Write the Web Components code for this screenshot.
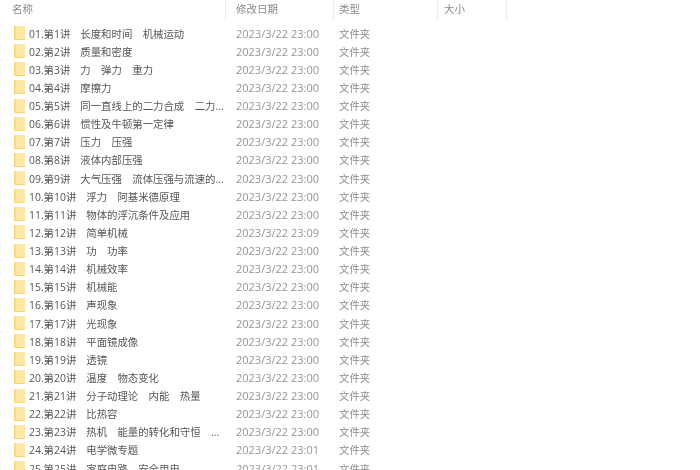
<!DOCTYPE html>
<html lang="zh">
<head>
<meta charset="utf-8">
<title>文件夹</title>
<style>
html,body{margin:0;height:470px;overflow:hidden;background:#fff;}
</style>
</head>
<body>
<file-list></file-list>
<script>
const filas = [
	["01.第1讲","长度和时间　机械运动","23:00"],
	["02.第2讲","质量和密度","23:00"],
	["03.第3讲","力　弹力　重力","23:00"],
	["04.第4讲","摩擦力","23:00"],
	["05.第5讲","同一直线上的二力合成　二力...","23:00"],
	["06.第6讲","惯性及牛顿第一定律","23:00"],
	["07.第7讲","压力　压强","23:00"],
	["08.第8讲","液体内部压强","23:00"],
	["09.第9讲","大气压强　流体压强与流速的...","23:00"],
	["10.第10讲","浮力　阿基米德原理","23:00"],
	["11.第11讲","物体的浮沉条件及应用","23:00"],
	["12.第12讲","简单机械","23:09"],
	["13.第13讲","功　功率","23:00"],
	["14.第14讲","机械效率","23:00"],
	["15.第15讲","机械能","23:00"],
	["16.第16讲","声现象","23:00"],
	["17.第17讲","光现象","23:00"],
	["18.第18讲","平面镜成像","23:00"],
	["19.第19讲","透镜","23:00"],
	["20.第20讲","温度　物态变化","23:00"],
	["21.第21讲","分子动理论　内能　热量","23:00"],
	["22.第22讲","比热容","23:00"],
	["23.第23讲","热机　能量的转化和守恒　...","23:00"],
	["24.第24讲","电学微专题","23:01"],
	["25.第25讲","家庭电路　安全用电","23:01"]
]

class FileHeader extends HTMLElement {
	constructor() {
		super()
		this.attachShadow({mode:'open'})
		this.shadowRoot.innerHTML = `
		<style>
:host{
	display:grid;
	grid-template-columns:226px 108px 104px 69px;
	height:20px;
	font-family:"Noto Sans CJK SC",sans-serif;
	font-size:10.5px;
	color:#8a8a8a;
}
div{
	display:flex;
	align-items:center;
	height:20px;
	padding-left:10px;
	padding-bottom:3px;
	box-sizing:border-box;
	border-right:1px solid #ececec;
}
div:nth-of-type(1){padding-left:12px;}
div:nth-of-type(3){padding-left:5px;}
div:nth-of-type(4){padding-left:6px;}
		</style>
		<div>名称</div>
		<div>修改日期</div>
		<div>类型</div>
		<div>大小</div>`
	}
}

class FileRow extends HTMLElement {
	constructor() {
		super()
		this.attachShadow({mode:'open'})
	}
	connectedCallback() {
		this.shadowRoot.innerHTML = `
		<style>
:host{
	display:grid;
	grid-template-columns:15px 207px 103px auto;
	align-items:center;
	height:18.13px;
	padding-left:14px;
	font-family:"Open Sans","Noto Sans CJK SC",sans-serif;
	font-size:10.4px;
	color:#565656;
}
svg{display:block;}
.nombre{
	white-space:nowrap;
	display:flex;
	gap:10px;
}
.fecha{color:#949494;font-size:11px;}
.tipo{color:#8c8c8c;}
		</style>
		<svg width="11" height="14" viewBox="0 0 11 14">
			<rect width="11" height="14" fill="#f8d576"/>
			<rect x="1.5" width="9.5" height="13" fill="#fde8a8"/>
		</svg>
		<div class="nombre"><span>${this.getAttribute('leccion')}</span><span>${this.getAttribute('tema')}</span></div>
		<div class="fecha">2023/3/22 ${this.getAttribute('hora')}</div>
		<div class="tipo">文件夹</div>`
	}
}

class FileList extends HTMLElement {
	constructor() {
		super()
		this.attachShadow({mode:'open'})
	}
	connectedCallback() {
		let html = `
		<style>
:host{display:block;width:700px;height:470px;overflow:hidden;filter:blur(.35px);}
.filas{padding-top:4px;}
		</style>
		<file-header></file-header>
		<div class="filas">`
		filas.forEach(f => {
			html += `<file-row leccion="${f[0]}" tema="${f[1]}" hora="${f[2]}"></file-row>`
		})
		this.shadowRoot.innerHTML = html + `</div>`
	}
}

customElements.define('file-header',FileHeader);
customElements.define('file-row',FileRow);
customElements.define('file-list',FileList);
</script>
</body>
</html>
